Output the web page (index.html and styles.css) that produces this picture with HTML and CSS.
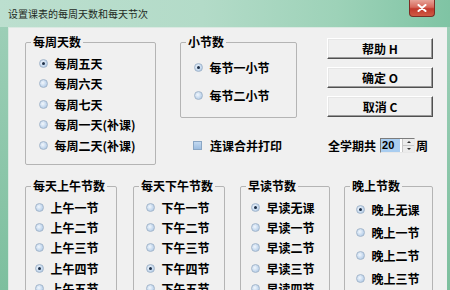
FILE: index.html
```html
<!DOCTYPE html>
<html lang="zh-CN">
<head>
<meta charset="utf-8">
<title>设置课表的每周天数和每天节次</title>
<link rel="stylesheet" href="styles.css">
</head>
<body>
<div class="win">
  <div class="titlebar">
    <span class="title">设置课表的每周天数和每天节次</span>
    <span class="close"><svg width="10" height="8" viewBox="0 0 10 8"><path d="M1.5 1 L8.5 7 M8.5 1 L1.5 7" stroke="#fff" stroke-width="2" stroke-linecap="round"/></svg></span>
  </div>
  <div class="frame">
    <div class="client">
      <div class="top">
        <fieldset class="grp g1">
          <legend>每周天数</legend>
          <div class="items">
            <div class="opt"><span class="rb on"></span>每周五天</div>
            <div class="opt"><span class="rb"></span>每周六天</div>
            <div class="opt"><span class="rb"></span>每周七天</div>
            <div class="opt"><span class="rb"></span>每周一天(补课)</div>
            <div class="opt"><span class="rb"></span>每周二天(补课)</div>
          </div>
        </fieldset>
        <div class="mid">
          <fieldset class="grp g2">
            <legend>小节数</legend>
            <div class="items">
              <div class="opt"><span class="rb on"></span>每节一小节</div>
              <div class="opt"><span class="rb"></span>每节二小节</div>
            </div>
          </fieldset>
          <div class="chk"><span class="box"></span>连课合并打印</div>
        </div>
        <div class="side">
          <div class="btn">帮助 H</div>
          <div class="btn">确定 O</div>
          <div class="btn">取消 C</div>
          <div class="spin">
            <span>全学期共</span>
            <span class="num"><span class="val">20</span><span class="arrows"><span class="up"></span><span class="down"></span></span></span>
            <span class="unit">周</span>
          </div>
        </div>
      </div>
      <div class="bottom">
        <fieldset class="grp g3">
          <legend>每天上午节数</legend>
          <div class="items">
            <div class="opt"><span class="rb"></span>上午一节</div>
            <div class="opt"><span class="rb"></span>上午二节</div>
            <div class="opt"><span class="rb"></span>上午三节</div>
            <div class="opt"><span class="rb on"></span>上午四节</div>
            <div class="opt"><span class="rb"></span>上午五节</div>
          </div>
        </fieldset>
        <fieldset class="grp g4">
          <legend>每天下午节数</legend>
          <div class="items">
            <div class="opt"><span class="rb"></span>下午一节</div>
            <div class="opt"><span class="rb"></span>下午二节</div>
            <div class="opt"><span class="rb"></span>下午三节</div>
            <div class="opt"><span class="rb on"></span>下午四节</div>
            <div class="opt"><span class="rb"></span>下午五节</div>
          </div>
        </fieldset>
        <fieldset class="grp g5">
          <legend>早读节数</legend>
          <div class="items">
            <div class="opt"><span class="rb on"></span>早读无课</div>
            <div class="opt"><span class="rb"></span>早读一节</div>
            <div class="opt"><span class="rb"></span>早读二节</div>
            <div class="opt"><span class="rb"></span>早读三节</div>
            <div class="opt"><span class="rb"></span>早读四节</div>
          </div>
        </fieldset>
        <fieldset class="grp g6">
          <legend>晚上节数</legend>
          <div class="items">
            <div class="opt"><span class="rb on"></span>晚上无课</div>
            <div class="opt"><span class="rb"></span>晚上一节</div>
            <div class="opt"><span class="rb"></span>晚上二节</div>
            <div class="opt"><span class="rb"></span>晚上三节</div>
            <div class="opt"><span class="rb"></span>晚上四节</div>
          </div>
        </fieldset>
      </div>
    </div>
  </div>
</div>
</body>
</html>
```
FILE: styles.css
```css
html, body {
  margin: 0;
  padding: 0;
  background: #f0f0f0;
}
.win {
  width: 450px;
  height: 290px;
  overflow: hidden;
  background: linear-gradient(to bottom, #9fd0b9, #7dbf9e);
  font-family: "Noto Sans CJK SC", "Noto Sans", sans-serif;
  color: #000;
}
.titlebar {
  height: 27px;
  display: flex;
  align-items: flex-start;
  background: linear-gradient(to right, #bcdfcf 0%, #b3dbc8 45%, #9dd2b8 75%, #7fc4a4 100%);
}
.title {
  padding: 8px 0 0 8px;
  font-size: 10px;
  line-height: 12px;
  color: #1e2a24;
}
.close {
  margin-left: auto;
  margin-right: 15px;
  width: 26px;
  height: 17px;
  box-sizing: border-box;
  border: 1px solid #7d2c24;
  border-top: none;
  border-radius: 0 0 4px 4px;
  background: linear-gradient(to bottom, #e7a398 0%, #d7685b 45%, #c2392c 55%, #cf5a44 100%);
  display: flex;
  align-items: center;
  justify-content: center;
}
.frame {
  display: flex;
  height: 263px;
  padding: 0 3px 0 8px;
}
.client {
  flex: 1;
  background: #f0f0f0;
  border-top: 1px solid #dbe9e2;
  border-left: 1px solid #dbe9e2;
  padding: 7px 0 0 16px;
}
.top {
  display: flex;
  align-items: flex-start;
}
.grp {
  margin: 0;
  padding: 0;
  box-sizing: border-box;
  border: 1px solid #b4b4b4;
  border-radius: 2px;
  min-width: 0;
}
.grp legend {
  margin-left: 5px;
  padding: 0 2px;
  font-size: 12px;
  line-height: 14px;
  font-weight: bold;
}
.opt {
  display: flex;
  align-items: center;
  white-space: nowrap;
  font-size: 12px;
  font-weight: bold;
  height: 20.5px;
}
.rb {
  width: 7px;
  height: 7px;
  border-radius: 50%;
  border: 1px solid #a3b6cb;
  background: radial-gradient(circle at 40% 40%, #f2f7fc 0%, #c6d9ee 55%, #a2bfdf 100%);
  margin-right: 7px;
  display: flex;
  align-items: center;
  justify-content: center;
  flex: none;
}
.rb.on::after {
  content: "";
  width: 3px;
  height: 3px;
  border-radius: 50%;
  background: #1c2f48;
}
.g1 { width: 131px; height: 130px; }
.g1 .items { padding: 4px 0 0 12.5px; }
.mid {
  margin-left: 24px;
  width: 117px;
}
.g2 { width: 117px; height: 83px; }
.g2 .items { padding: 4px 0 0 12.5px; }
.g2 .opt { height: 28px; }
.chk {
  display: flex;
  align-items: center;
  height: 14px;
  margin-top: 20px;
  padding-left: 13px;
  font-size: 12px;
  font-weight: bold;
  white-space: nowrap;
}
.box {
  width: 7px;
  height: 7px;
  border: 1px solid #8aa6c4;
  background: linear-gradient(to bottom, #c3d9f0, #9dbde0);
  margin-right: 8px;
}
.side {
  margin-left: 30px;
  width: 106px;
  padding-top: 3px;
  display: flex;
  flex-direction: column;
  gap: 8px;
}
.btn {
  height: 21px;
  box-sizing: border-box;
  border: 1px solid;
  border-color: #ffffff #505050 #505050 #ffffff;
  box-shadow: inset -1px -1px #9a9a9a, inset 1px 1px #e6e6e6;
  background: #f0f0f0;
  display: flex;
  align-items: center;
  justify-content: center;
  font-size: 12px;
  font-weight: bold;
}
.spin {
  display: flex;
  align-items: center;
  height: 14px;
  margin-top: 13px;
  margin-left: 1px;
  font-size: 12px;
  font-weight: bold;
  white-space: nowrap;
}
.num {
  display: flex;
  margin-left: 4px;
  width: 35px;
  height: 15px;
  box-sizing: border-box;
  border: 1px solid;
  border-color: #7c7c7c #e8e8e8 #e8e8e8 #7c7c7c;
  background: #fff;
}
.val {
  width: 19px;
  background: #a9cdf0;
  font-family: "Liberation Sans", Arial, sans-serif;
  font-size: 11px;
  line-height: 13px;
  font-weight: bold;
  padding-left: 1px;
  box-sizing: border-box;
}
.arrows {
  margin-left: auto;
  width: 11px;
  display: flex;
  flex-direction: column;
  background: #ececec;
  border-left: 1px solid #c8c8c8;
}
.arrows span {
  flex: 1;
  display: flex;
  align-items: center;
  justify-content: center;
}
.up { border-bottom: 1px solid #c8c8c8; }
.up::after {
  content: "";
  border-left: 2px solid transparent;
  border-right: 2px solid transparent;
  border-bottom: 2px solid #333;
}
.down::after {
  content: "";
  border-left: 2px solid transparent;
  border-right: 2px solid transparent;
  border-top: 2px solid #333;
}
.unit { margin-left: 1px; }
.bottom {
  display: flex;
  margin-top: 14px;
}
.g3, .g4, .g5, .g6 { height: 150px; }
.g3 { width: 92px; }
.g3 .items { padding: 4px 0 0 8.5px; }
.g4 { width: 92px; margin-left: 16px; }
.g4 .items { padding: 4px 0 0 11.5px; }
.g5 { width: 90px; margin-left: 15px; }
.g5 .items { padding: 4px 0 0 9.5px; }
.g6 { width: 89px; margin-left: 14px; }
.g6 .items { padding: 5px 0 0 10.5px; }
.g3 .opt, .g4 .opt, .g5 .opt { height: 20.3px; }
.g6 .opt { height: 23px; }
```
